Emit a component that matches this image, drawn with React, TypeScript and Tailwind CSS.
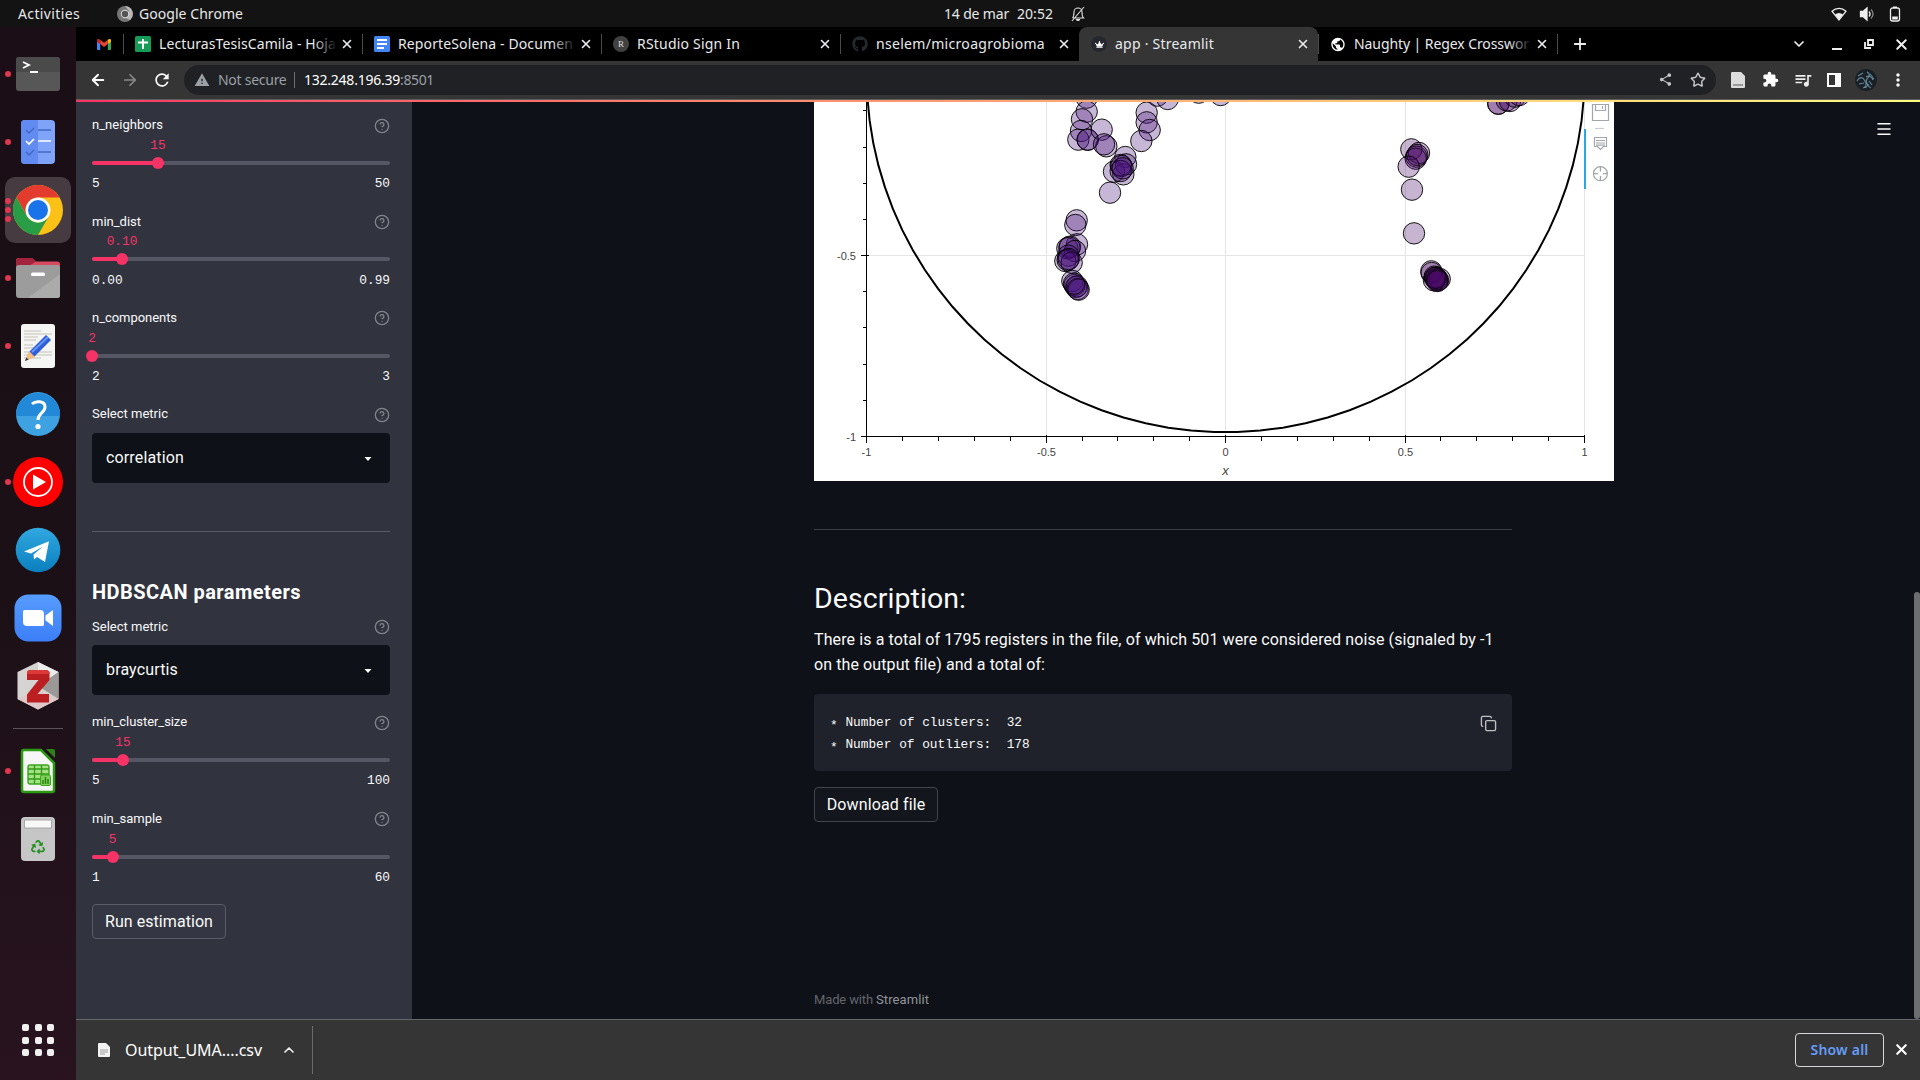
import { useLayoutEffect, useRef, type ReactNode } from "react";
import { ArrowLeft, ArrowRight, ChevronDown, ChevronUp, CircleHelp, Copy, Menu, Plus, Star, X } from "lucide-react";
import { FaGithub, FaCrown, FaRecycle } from "react-icons/fa";
import { MdRefresh, MdShare, MdExtension, MdQueueMusic, MdWarning, MdPublic, MdMoreVert } from "react-icons/md";

/** Text whose tracking is adjusted so that it spans exactly `w` pixels. */
function Fit({ w, children, className = "" }: { w: number; children: string; className?: string }) {
  const ref = useRef<HTMLSpanElement>(null);
  useLayoutEffect(() => {
    const el = ref.current;
    if (!el) return;
    el.style.letterSpacing = "0px";
    const natural = el.getBoundingClientRect().width;
    el.style.letterSpacing = `${(w - natural) / children.length}px`;
  }, [w, children]);
  return (
    <span ref={ref} className={`inline-block shrink-0 whitespace-pre ${className}`}>
      {children}
    </span>
  );
}

/* ---------- GNOME top bar ---------- */
function TopBar() {
  return (
    <header className="grid h-[27px] shrink-0 grid-cols-3 items-center bg-[#131313] text-[14px] leading-[27px] text-[#e8e8e8]">
      <div className="flex items-center pl-[18px]">
        <Fit w={62}>Activities</Fit>
        <svg className="ml-[37px] h-4 w-4" viewBox="0 0 16 16">
          <circle cx="8" cy="8" r="8" fill="#777" />
          <path d="M8 0a8 8 0 0 1 5 14L9 12 12 5z" fill="#b9b9b9" />
          <circle cx="8" cy="8" r="4.2" fill="#ddd" />
          <circle cx="8" cy="8" r="3.2" fill="#555" />
        </svg>
        <Fit w={104} className="ml-[6px]">Google Chrome</Fit>
      </div>
      <div className="flex items-center pl-[304px]">
        <Fit w={65}>14 de mar</Fit>
        <Fit w={36} className="ml-[8px]">20:52</Fit>
        <svg className="ml-[17px] h-4 w-4" viewBox="0 0 16 16" fill="none" stroke="#e0e0e0" strokeWidth="1.1">
          <path d="M3 12h10.5c-1.5-1.5-1.5-3-1.5-6a4 4 0 0 0-8 0c0 3 0 4.500-1.500 6M14 1 2 15" />
          <path d="M6.500 13.500a1.600 1.600 0 0 0 3 0z" fill="#e0e0e0" />
        </svg>
      </div>
      <div className="flex items-center justify-end gap-[12px] pr-[17px]">
        <svg className="h-4 w-4" viewBox="0 0 16 16">
          <path d="M1 5.200C5 1.300 11 1.300 15 5.200L8 14z" fill="none" stroke="#eee" strokeWidth="1.200" />
          <path d="M4 8.500c2.500-2 5.500-2 8 0L8 14z" fill="#eee" />
        </svg>
        <svg className="h-4 w-4" viewBox="0 0 16 16" fill="none" stroke="#eee" strokeWidth="1.300">
          <path d="M1.500 5.500h2.500l4-3.500v12L4 10.500H1.500z" fill="#eee" />
          <path d="M10 5.500c1.300 1.500 1.300 3.500 0 5" />
          <path d="M12 3.500c2.600 2.800 2.600 6.200 0 9" stroke="#888" />
        </svg>
        <svg className="h-4 w-4" viewBox="0 0 16 16">
          <rect x="3.500" y="2" width="9" height="13" rx="2" fill="none" stroke="#eee" strokeWidth="1.300" />
          <rect x="6" y="0.500" width="4" height="1.500" fill="#eee" />
          <rect x="5.200" y="10.500" width="5.600" height="3" fill="#eee" />
        </svg>
      </div>
    </header>
  );
}

/* ---------- Dock ---------- */
function DockItem({ children, dots = 0, active = false }: { children: ReactNode; dots?: number; active?: boolean }) {
  return (
    <svg className="block h-[68px] w-[76px] shrink-0" viewBox="0 0 76 68">
      {active && <rect x="5" y="1" width="66" height="66" rx="10" fill="#463b41" />}
      {dots === 1 && <circle cx="8" cy="34" r="3" fill="#e0364f" />}
      {dots === 3 && [25, 34, 43].map((y) => <circle key={y} cx="8" cy={y} r="3" fill="#e0364f" />)}
      {children}
    </svg>
  );
}

function Dock() {
  return (
    <nav className="flex w-[76px] shrink-0 flex-col bg-gradient-to-b from-[#1b0e16] via-[#1b1016] to-[#28131f] pt-[13px]">
      <DockItem dots={1}>
        <rect x="16" y="17" width="44" height="34" rx="3" fill="#575757" />
        <path d="M16 32V20a3 3 0 0 1 3-3h38a3 3 0 0 1 3 3v12z" fill="#4a4a4a" />
        <path d="M23 22l6 3-6 3M30 32h8" fill="none" stroke="#fff" strokeWidth="1.800" />
      </DockItem>
      <DockItem dots={1}>
        <rect x="21" y="12" width="34" height="44" rx="4" fill="#7fa3f8" />
        <path d="M38 12v44H25a4 4 0 0 1-4-4V16a4 4 0 0 1 4-4z" fill="#628bf2" />
        <path d="M26 22l3 3 5-5M26 44l3 3 5-5M38 22h13M38 44h13" fill="none" stroke="#4468c0" strokeWidth="1.500" />
        <path d="M26 33l3 3 5-5M38 33h13" fill="none" stroke="#fff" strokeWidth="1.700" />
      </DockItem>
      <DockItem dots={3} active>
        <circle cx="38" cy="34" r="25" fill="#fbc116" />
        <path d="M16.300 21.500A25 25 0 0 1 59.700 21.500H38L27.200 40.200z" fill="#e33b2e" />
        <path d="M16.300 21.500 27.200 40.200A12.500 12.500 0 0 0 48.800 40.200L38 59A25 25 0 0 1 16.300 21.500z" fill="#299c46" />
        <circle cx="38" cy="34" r="12.500" fill="#fff" />
        <circle cx="38" cy="34" r="10" fill="#1a73e8" />
      </DockItem>
      <DockItem dots={1}>
        <path d="M16 36V17a3 3 0 0 1 3-3h13l4 3.500h21a3 3 0 0 1 3 3V36z" fill="#d84a62" />
        <path d="M16 30V17a3 3 0 0 1 3-3h13l4 3.500z" fill="#a3223d" />
        <rect x="16" y="21" width="44" height="33" rx="3" fill="#9c9c9c" />
        <path d="M60 30v21a3 3 0 0 1-3 3H28z" fill="#ababab" />
        <rect x="31" y="28.500" width="14" height="3.500" rx="1.500" fill="#fff" />
      </DockItem>
      <DockItem dots={1}>
        <rect x="21" y="12" width="34" height="44" rx="3" fill="#f5f5f3" />
        <path d="M24 19h17M24 22h28M24 25h14M24 28h12M24 33h9M24 36h11M24 40h28M24 43h28M24 46h17" stroke="#c4c2b8" strokeWidth="1.200" />
        <path d="M25 49l4-9 17-17 5 5-17 17z" fill="#2c5fd8" />
        <path d="M32 40l16-15" stroke="#6b95f5" strokeWidth="2" />
        <path d="M25 49l4-10 6 6z" fill="#f6bd82" />
        <path d="M25 49l1.500-3.500 2 2z" fill="#333" />
      </DockItem>
      <DockItem>
        <circle cx="38" cy="34" r="22" fill="#3ea1e2" />
        <path d="M16 36a22 22 0 0 1 44-2v2z" fill="#2288d8" />
        <path d="M32 24c3.500-3.500 13-3.500 13 3 0 6-7 6-7 13" fill="none" stroke="#fff" strokeWidth="3" />
        <circle cx="38" cy="46.500" r="2.600" fill="#fff" />
      </DockItem>
      <DockItem dots={1}>
        <circle cx="38" cy="34" r="25" fill="#f00" />
        <circle cx="38" cy="34" r="14" fill="none" stroke="#fff" strokeWidth="1.800" />
        <path d="M33 26.500v15L46 34z" fill="#fff" />
      </DockItem>
      <DockItem>
        <defs>
          <linearGradient id="tg" x1="0" y1="0" x2="0" y2="1">
            <stop offset="0" stopColor="#31a8e0" />
            <stop offset="1" stopColor="#0b7fbf" />
          </linearGradient>
        </defs>
        <circle cx="38" cy="34" r="22.300" fill="url(#tg)" />
        <path d="M24 35.500 49 25.300 45 46 37 41 34 43.500 33.500 38.500 43 30.500 31 37.500z" fill="#fff" />
      </DockItem>
      <DockItem>
        <defs>
          <linearGradient id="zm" x1="0" y1="0" x2="0" y2="1">
            <stop offset="0" stopColor="#579cff" />
            <stop offset="1" stopColor="#3c7ff8" />
          </linearGradient>
        </defs>
        <rect x="14.500" y="10.500" width="47" height="47" rx="14" fill="url(#zm)" />
        <path d="M23 27.500a1.500 1.500 0 0 1 1.500-1.500H40a4 4 0 0 1 4 4v10.500a1.500 1.500 0 0 1-1.500 1.500H27a4 4 0 0 1-4-4z" fill="#fff" />
        <path d="M45.500 31.500 53 26v16l-7.500-5.500z" fill="#fff" />
      </DockItem>
      <DockItem>
        <path d="M38 10 58.500 20v27L38 57.500 17.500 47V20z" fill="#d5d4d3" />
        <path d="M38 10 58.500 20 38 34z" fill="#ececeb" />
        <path d="M58.500 20v27L38 34z" fill="#9a9998" />
        <path d="M17.500 47 38 57.500 58.500 47 38 38z" fill="#dfc8c8" />
        <path d="M27 20l2-2h18l2.500 2v8L37.500 42H49v8.500H27v-8L38.500 28H27z" fill="#bb1f22" />
        <path d="M27 20l2-2h18l2.500 2v2H27z" fill="#dc3a38" />
      </DockItem>
      <div className="mx-[13px] my-2 h-px shrink-0 bg-[#5c5258]" />
      <DockItem dots={1}>
        <path d="M22 15a2 2 0 0 1 2-2h17l13 13v27a2 2 0 0 1-2 2H24a2 2 0 0 1-2-2z" fill="#f6f6f6" stroke="#2b9a12" strokeWidth="2.500" />
        <path d="M46 12h7a2 2 0 0 1 2 2v7z" fill="#2b8415" />
        <rect x="28" y="28" width="21" height="19" rx="2" fill="#a5e082" stroke="#3aa51f" strokeWidth="1.400" />
        <path d="M28 32h21M28 37h21M28 42h21M34.500 28v19M41.500 28v19" stroke="#2f9a18" strokeWidth="1.300" />
        <rect x="40.500" y="38" width="10" height="10.500" rx="1.500" fill="#83cf5c" stroke="#3aa51f" />
        <path d="M43 47v-4M45.500 47v-7M48 47v-5" stroke="#25860f" strokeWidth="1.500" />
      </DockItem>
      <DockItem>
        <rect x="21" y="12" width="34" height="44" rx="4" fill="#c6c6c6" />
        <path d="M24.500 15h27v8h-27z" fill="#f8f8f8" stroke="#999" strokeWidth="0.800" />
        <FaRecycle x={31} y={35} width={14} height={14} size={14} color="#269127" />
      </DockItem>
      <div className="mt-auto mb-[24px] grid grid-cols-3 gap-[5.500px] self-center">
        {Array.from({ length: 9 }, (_, i) => (
          <span key={i} className="h-[7px] w-[7px] rounded-[2px] bg-[#f0f0f0]" />
        ))}
      </div>
    </nav>
  );
}

/* ---------- Browser chrome ---------- */
function Tab({ icon, title, w, active = false, fade = false }: { icon: ReactNode; title: string; w: number; active?: boolean; fade?: boolean }) {
  return (
    <div className={`flex w-[239px] shrink-0 items-center ${active ? "rounded-t-[8px] bg-[#353535]" : ""}`}>
      <span className={`h-5 w-px ${active ? "bg-transparent" : "bg-[#4a4a4a]"}`} />
      <span className="ml-[11px] flex h-4 w-4 items-center justify-center">{icon}</span>
      <span className="relative ml-[8px] w-[178px] text-[14px] leading-[20px] text-[#e8eaed]">
        <Fit w={w}>{title}</Fit>
        {fade && <span className="absolute inset-y-0 right-0 w-6 bg-gradient-to-r from-transparent to-black" />}
      </span>
      <X className="ml-[3px]" size={14} strokeWidth={2.800} color="#e8eaed" />
    </div>
  );
}

function TabStrip() {
  return (
    <div className="flex h-[34px] bg-black">
      <div className="flex w-[47px] shrink-0 items-center justify-center pl-[9px]">
        <svg className="h-[11px] w-[14px]" viewBox="0 0 14 11">
          <path d="M0 1.500V10a1 1 0 0 0 1 1h2.200V4.500z" fill="#4285f4" />
          <path d="M14 1.500V10a1 1 0 0 1-1 1h-2.200V4.500z" fill="#34a853" />
          <path d="M0 1.500C0 0 1.700-.4 3.200.8V5L0 2.800z" fill="#c5221f" />
          <path d="M14 1.500c0-1.500-1.700-1.900-3.200-.7V5L14 2.800z" fill="#fbbc04" />
          <path d="M3.200.8 7 3.700l3.800-2.900V5L7 7.900 3.200 5z" fill="#ea4335" />
        </svg>
      </div>
      <Tab
        title="LecturasTesisCamila - Hoja" w={177} fade
        icon={<svg viewBox="0 0 16 16" className="h-4 w-4"><rect width="16" height="16" rx="1.500" fill="#159d58" /><path d="M3 6.500h10M8 3v10" stroke="#fff" strokeWidth="2" /></svg>}
      />
      <Tab
        title="ReporteSolena - Documen" w={175} fade
        icon={<svg viewBox="0 0 16 16" className="h-4 w-4"><rect width="16" height="16" rx="1.500" fill="#4285f4" /><path d="M3 4h10M3 8h10M3 12h7" stroke="#fff" strokeWidth="1.800" /></svg>}
      />
      <Tab
        title="RStudio Sign In" w={103}
        icon={<span className="flex h-4 w-4 items-center justify-center rounded-full bg-[#414141] font-['Liberation_Serif',serif] text-[9px] leading-none text-[#ddd]">R</span>}
      />
      <Tab title="nselem/microagrobioma" w={169} icon={<FaGithub size={16} color="#24292e" />} />
      <Tab
        active title="app · Streamlit" w={99}
        icon={<span className="flex h-4 w-4 items-center justify-center rounded-full bg-[#262730]"><FaCrown size={9} color="#fff" /></span>}
      />
      <Tab title="Naughty | Regex Crosswor" w={175} fade icon={<MdPublic size={17} color="#fff" />} />
      <div className="flex flex-1 items-center">
        <span className="h-5 w-px bg-[#4a4a4a]" />
        <Plus className="ml-[13px]" size={18} strokeWidth={2.400} color="#eee" />
        <div className="ml-auto flex items-center pr-[10px]">
          <ChevronDown size={16} strokeWidth={2.600} color="#eee" />
          <span className="mt-[9px] ml-[25px] h-[2px] w-[10px] bg-[#eee]" />
          <svg className="ml-[22px] h-[10px] w-[10px]" viewBox="0 0 10 10" fill="none" stroke="#eee" strokeWidth="1.800">
            <path d="M4 1h5v5H4zM1 3v6h6" />
          </svg>
          <X className="ml-[19px]" size={17} strokeWidth={2.800} color="#eee" />
        </div>
      </div>
    </div>
  );
}

function Toolbar() {
  return (
    <div className="flex h-[39px] items-center border-b border-[#5d5d5d] bg-[#353535] pb-px">
      <div className="flex w-[108px] items-center gap-[14px] pl-[13px]">
        <ArrowLeft size={18} strokeWidth={2.500} color="#fff" />
        <ArrowRight size={18} strokeWidth={2.300} color="#8a8a8a" />
        <MdRefresh className="-ml-px" size={20} color="#fff" />
      </div>
      <div className="flex h-[30px] w-[1532px] items-center rounded-full bg-[#202124] text-[14px] text-[#9aa0a6]">
        <MdWarning className="ml-[10px]" size={16} color="#9aa0a6" />
        <Fit w={68.500} className="ml-[8px]">Not secure</Fit>
        <span className="ml-[7px] h-4 w-px bg-[#6b6e72]" />
        <Fit w={96} className="ml-[9.500px] text-white">132.248.196.39</Fit>
        <Fit w={34}>:8501</Fit>
        <MdShare className="ml-auto" size={15} color="#c3c5c8" />
        <Star className="mr-[10px] ml-[17px]" size={16} strokeWidth={2.200} color="#c3c5c8" />
      </div>
      <div className="flex flex-1 items-center pl-[15px]">
        <svg className="h-4 w-[14px]" viewBox="0 0 14 16">
          <path d="M0 1a1 1 0 0 1 1-1h9l4 4v11a1 1 0 0 1-1 1H1a1 1 0 0 1-1-1z" fill="#dcdcdc" />
          <path d="M2 12h10v2H2z" fill="#999" />
        </svg>
        <MdExtension className="ml-[17px]" size={17} color="#fff" />
        <MdQueueMusic className="ml-[14px]" size={20} color="#eee" />
        <svg className="ml-[14px] h-[14px] w-[14px]" viewBox="0 0 14 14">
          <path d="M1 1h12v12H1z" fill="none" stroke="#fff" strokeWidth="2" />
          <path d="M8 1h5v12H8z" fill="#fff" />
        </svg>
        <svg className="ml-[14px] h-[22px] w-[22px]" viewBox="0 0 22 22">
          <circle cx="11" cy="11" r="11" fill="#1a2026" />
          <path d="M2 12c3-5 6-4 8 0s1 6-2 7M12 3c4 2 2 5 0 7s1 8 4 9M3 7l5-3M15 5l4 5M14 12l3 4M4 15l5-1" fill="none" stroke="#5f8799" strokeWidth="1.100" />
          <path d="M11 8c3-2 6 0 7 3M13 15c0 3-3 4-4 3" fill="none" stroke="#8fb0bf" strokeWidth="0.900" />
        </svg>
        <MdMoreVert className="ml-[11px]" size={20} color="#fff" />
      </div>
    </div>
  );
}

/* ---------- Sidebar ---------- */
const sans = "font-['Roboto','Noto_Sans',sans-serif]";

function Label({ text, w }: { text: string; w: number }) {
  return (
    <div className="flex h-5 items-center justify-between text-[13px] leading-5 text-[#fafafa]">
      <Fit w={w} className="mt-[0.600px]">{text}</Fit>
      <CircleHelp className="mt-[1px]" size={16} strokeWidth={1.900} color="#84858c" />
    </div>
  );
}

function Slider({ label, w, value, min, max, at }: { label: string; w: number; value: string; min: string; max: string; at: number }) {
  return (
    <div className="h-[96.400px]">
      <Label text={label} w={w} />
      <div className="relative h-5 font-['Liberation_Mono',monospace] text-[12.800px] leading-[21.600px] text-[#f63366]">
        <span className="absolute -translate-x-1/2" style={{ left: at }}>{value}</span>
      </div>
      <div className="relative flex h-4 items-center">
        <div className="h-1 w-full overflow-hidden rounded-[4px] bg-[#555764]">
          <div className="h-full bg-[#f63366]" style={{ width: at }} />
        </div>
        <span className="absolute h-3 w-3 -translate-x-1/2 rounded-full bg-[#f63366]" style={{ left: at }} />
      </div>
      <div className="mt-[3.200px] flex h-5 justify-between font-['Liberation_Mono',monospace] text-[12.800px] leading-5 text-[#fafafa]">
        <span>{min}</span>
        <span>{max}</span>
      </div>
    </div>
  );
}

function Select({ value, w }: { value: string; w: number }) {
  return (
    <div className="mt-[8.500px] flex h-[50px] items-center justify-between rounded-[4px] bg-[#0e1117] pr-[18px] pl-[14px] text-[16px] text-[#fafafa]">
      <Fit w={w}>{value}</Fit>
      <svg className="mt-[2px] h-1 w-2" viewBox="0 0 8 4"><path d="M0.500 0h7L4 4z" fill="#fff" /></svg>
    </div>
  );
}

function Sidebar() {
  return (
    <aside className={`flex w-[336px] shrink-0 flex-col bg-[#31333f] px-4 pt-[13px] pr-[22px] ${sans}`}>
      <Slider label="n_neighbors" w={71} value="15" min="5" max="50" at={66} />
      <Slider label="min_dist" w={49} value="0.10" min="0.00" max="0.99" at={30} />
      <Slider label="n_components" w={85} value="2" min="2" max="3" at={0} />
      <Label text="Select metric" w={76} />
      <Select value="correlation" w={78} />
      <div className="mt-[48px] h-px bg-[#585a65]" />
      <h2 className="mt-[45px] h-[30px] text-[20px] leading-[30px] font-bold text-white">
        <Fit w={209}>HDBSCAN parameters</Fit>
      </h2>
      <div className="h-[10px]" />
      <Label text="Select metric" w={76} />
      <Select value="braycurtis" w={72} />
      <div className="h-[17px]" />
      <Slider label="min_cluster_size" w={95} value="15" min="5" max="100" at={31} />
      <Slider label="min_sample" w={70} value="5" min="1" max="60" at={20.500} />
      <button className="-mt-[0.500px] h-[35px] w-[134px] rounded-[4px] border border-[#5a5c66] bg-[#343743] text-[16px] text-[#fafafa]">
        <Fit w={108}>Run estimation</Fit>
      </button>
    </aside>
  );
}

/* ---------- Scatter plot ---------- */
const X0 = 411.6;
const Y0 = -27.3;
const UX = 358.9;
const UY = 361.800;

const left: [number, number][] = [
  [260, 8], [260, 50], [246, 73], [243, 108], [235, 134], [263, 134], [263, 134], [305, 104], [319, 154], [312, 148], [376, 186],
  [440, 53], [440, 82], [449, 105], [424, 138], [342, 230], [370, 238], [378, 208], [362, 210], [364, 213], [362, 228], [368, 220],
  [330, 293], [472, 2], [503, 12], [596, -7], [662, 0],
  [230, 376], [226, 390], [231, 448], [202, 460], [210, 455], [208, 458], [225, 468], [205, 482], [196, 498], [203, 495], [215, 503],
  [206, 492], [217, 558], [224, 570], [228, 576], [231, 574], [233, 582], [236, 584], [222, 566],
].map(([x, y]) => [x / 3 + 186, y / 3 - 7]);

const right: [number, number][] = [
  [154, 163], [177, 174], [169, 185], [167, 191], [172, 180], [146, 215], [156, 284], [162, 415], [214, 529], [215, 534],
  [224, 545], [230, 552], [231, 554], [234, 556], [239, 552], [222, 556], [228, 548], [225, 549], [232, 558],
  [415, 26], [415, 26], [440, 16], [450, 18], [465, 5], [478, 0],
].map(([x, y]) => [x / 3 + 546, y / 3 - 7]);

const boundary = Array.from({ length: 99 }, (_, i) => {
  const t = (2 * Math.PI * i) / 98;
  return `${(X0 + UX * Math.cos(t)).toFixed(1)},${(Y0 + 357.6 * Math.sin(t)).toFixed(1)}`;
}).join(" ");

const tenths = Array.from({ length: 21 }, (_, i) => i - 10);

function Plot() {
  const bottom = 334.5;
  return (
    <svg className="block h-[379px] w-[800px] shrink-0 bg-white" viewBox="0 0 800 379">
      <g stroke="#e5e5e5" shapeRendering="crispEdges">
        {[-0.5, 0, 0.5, 1].map((v) => <path key={v} d={`M${X0 + v * UX} 0V${bottom}`} />)}
        <path d="M53 153.500H770.500" />
      </g>
      <polyline points={boundary} fill="none" stroke="#000" strokeWidth="2" />
      <g stroke="#000" strokeWidth="1" fillOpacity="0.3" strokeOpacity="0.9">
        {left.map(([x, y], i) => <circle key={i} cx={x} cy={y} r="10.700" fill="#451077" />)}
        {right.map(([x, y], i) => <circle key={i} cx={x} cy={y} r="10.700" fill="#450864" />)}
      </g>
      <g stroke="#000" shapeRendering="crispEdges">
        <path d={`M52.500 0V${bottom}H770.500`} fill="none" />
        {tenths.map((n) => {
          const x = X0 + (n / 10) * UX;
          return <path key={n} d={`M${x} ${n % 5 ? bottom : bottom - 2}V${n % 5 ? bottom + 4 : bottom + 6}`} />;
        })}
        {[-1, -2, -3, -4, -5, -6, -7, -8, -9, -10].map((n) => {
          const y = n === -10 ? bottom : Y0 - (n / 10) * UY;
          return <path key={n} d={`M${n % 5 ? 49 : 47} ${y}H${n % 5 ? 53 : 55}`} />;
        })}
      </g>
      <g className="font-['Liberation_Sans',sans-serif] text-[11px]" fill="#444" textAnchor="middle">
        <text x="52.500" y="354">-1</text>
        <text x="232.500" y="354">-0.5</text>
        <text x="411.500" y="354">0</text>
        <text x="591.500" y="354">0.5</text>
        <text x="770.500" y="354">1</text>
        <text x="411.500" y="373" className="text-[13px] italic">x</text>
        <text x="42" y="157.500" textAnchor="end">-0.5</text>
        <text x="42" y="338.500" textAnchor="end">-1</text>
      </g>
      <rect x="770" y="27" width="2" height="60" fill="#26aae1" />
      <g fill="none" stroke="#a1a6a9" strokeWidth="1.200">
        <path d="M778.500 2.500h16v16h-16zM781.500 2.500v6h10v-6M788.500 4v3" />
        <path d="M781 26.500h9" stroke="#ccc" />
        <path d="M780.500 35.500h12v9h-3l-3 3-3-3h-3zM782 38.500h9M782 41h9M782 43.200h9" />
        <circle cx="786.400" cy="71.700" r="7" />
        <path d="M786.400 65v4.500M786.400 74v4.500M779.500 71.700h4.500M789 71.700h4.500" />
      </g>
    </svg>
  );
}

/* ---------- Main content ---------- */
function CodeLine({ text }: { text: string }) {
  return (
    <div>
      <span className="relative top-[3px]">*</span> {text}
    </div>
  );
}

function Content() {
  return (
    <main className={`relative flex flex-1 flex-col items-start overflow-hidden bg-[#0e1117] pl-[402px] text-[#fafafa] ${sans}`}>
      <Plot />
      <div className="mt-[48px] h-px w-[698px] bg-[#3c3e43]" />
      <h3 className="mt-[51px] h-[36px] text-[28.500px] leading-[36px]">
        <Fit w={152}>Description:</Fit>
      </h3>
      <p className="mt-[10px] flex flex-col text-[16px] leading-[25px]">
        <Fit w={679}>There is a total of 1795 registers in the file, of which 501 were considered noise (signaled by -1</Fit>
        <Fit w={230.500} className="self-start">on the output file) and a total of:</Fit>
      </p>
      <div className="mt-[17px] flex h-[77px] w-[698px] items-start justify-between rounded-[4px] bg-[#20222b] pt-[17.500px] pr-[15.500px] pl-4">
        <div className="font-['Liberation_Mono',monospace] text-[12.800px] leading-[22px] whitespace-pre">
          <CodeLine text="Number of clusters:  32" />
          <CodeLine text="Number of outliers:  178" />
        </div>
        <Copy className="mt-[3px]" size={17} strokeWidth={1.900} color="#c0c1c4" />
      </div>
      <button className="mt-4 h-[35px] w-[124px] rounded-[4px] border border-[#42444b] bg-[#13161d] text-[16px]">
        <Fit w={98}>Download file</Fit>
      </button>
      <p className="mt-[168px] text-[13px] leading-5 text-[#63656b]">
        <Fit w={62}>Made with </Fit>
        <Fit w={53} className="text-[#92949a]">Streamlit</Fit>
      </p>
      <Menu className="absolute top-[18px] right-[27px]" size={18} strokeWidth={2} color="#fafafa" />
      <span className="absolute right-0 bottom-0 h-[427px] w-[6px] rounded-full bg-[#6c6d70]" />
    </main>
  );
}

function DownloadShelf() {
  return (
    <footer className="flex h-[61px] shrink-0 items-center border-t border-[#66676a] bg-[#353535] pb-px text-[16px] text-white">
      <svg className="ml-[22px] h-[14px] w-3" viewBox="0 0 12 14">
        <path d="M0 1a1 1 0 0 1 1-1h7l4 4v9a1 1 0 0 1-1 1H1a1 1 0 0 1-1-1z" fill="#f3f3f3" />
        <path d="M2 7h8M2 9h8M2 11h5" stroke="#999" strokeWidth="0.900" />
      </svg>
      <Fit w={137} className="ml-[15px]">Output_UMA....csv</Fit>
      <ChevronUp className="ml-[19px]" size={16} strokeWidth={2.500} color="#eee" />
      <span className="ml-[15px] h-[48px] w-px bg-[#6b6b6b]" />
      <button className="ml-auto h-[34px] w-[89px] rounded-[4px] border border-[#d5d7da] text-[14px] font-semibold text-[#669df6]">
        <Fit w={58}>Show all</Fit>
      </button>
      <X className="mr-[10px] ml-[9px]" size={17} strokeWidth={3} color="#fff" />
    </footer>
  );
}

export default function App() {
  return (
    <div className="flex h-[1080px] w-[1920px] flex-col overflow-hidden bg-black font-['Noto_Sans',sans-serif]">
      <TopBar />
      <div className="flex min-h-0 flex-1">
        <Dock />
        <div className="flex min-w-0 flex-1 flex-col">
          <TabStrip />
          <Toolbar />
          <div className="h-[2px] shrink-0 bg-gradient-to-r from-[#f63366] via-[#ffa071] to-[#fffd80]" />
          <div className="flex min-h-0 flex-1">
            <Sidebar />
            <Content />
          </div>
          <DownloadShelf />
        </div>
      </div>
    </div>
  );
}
